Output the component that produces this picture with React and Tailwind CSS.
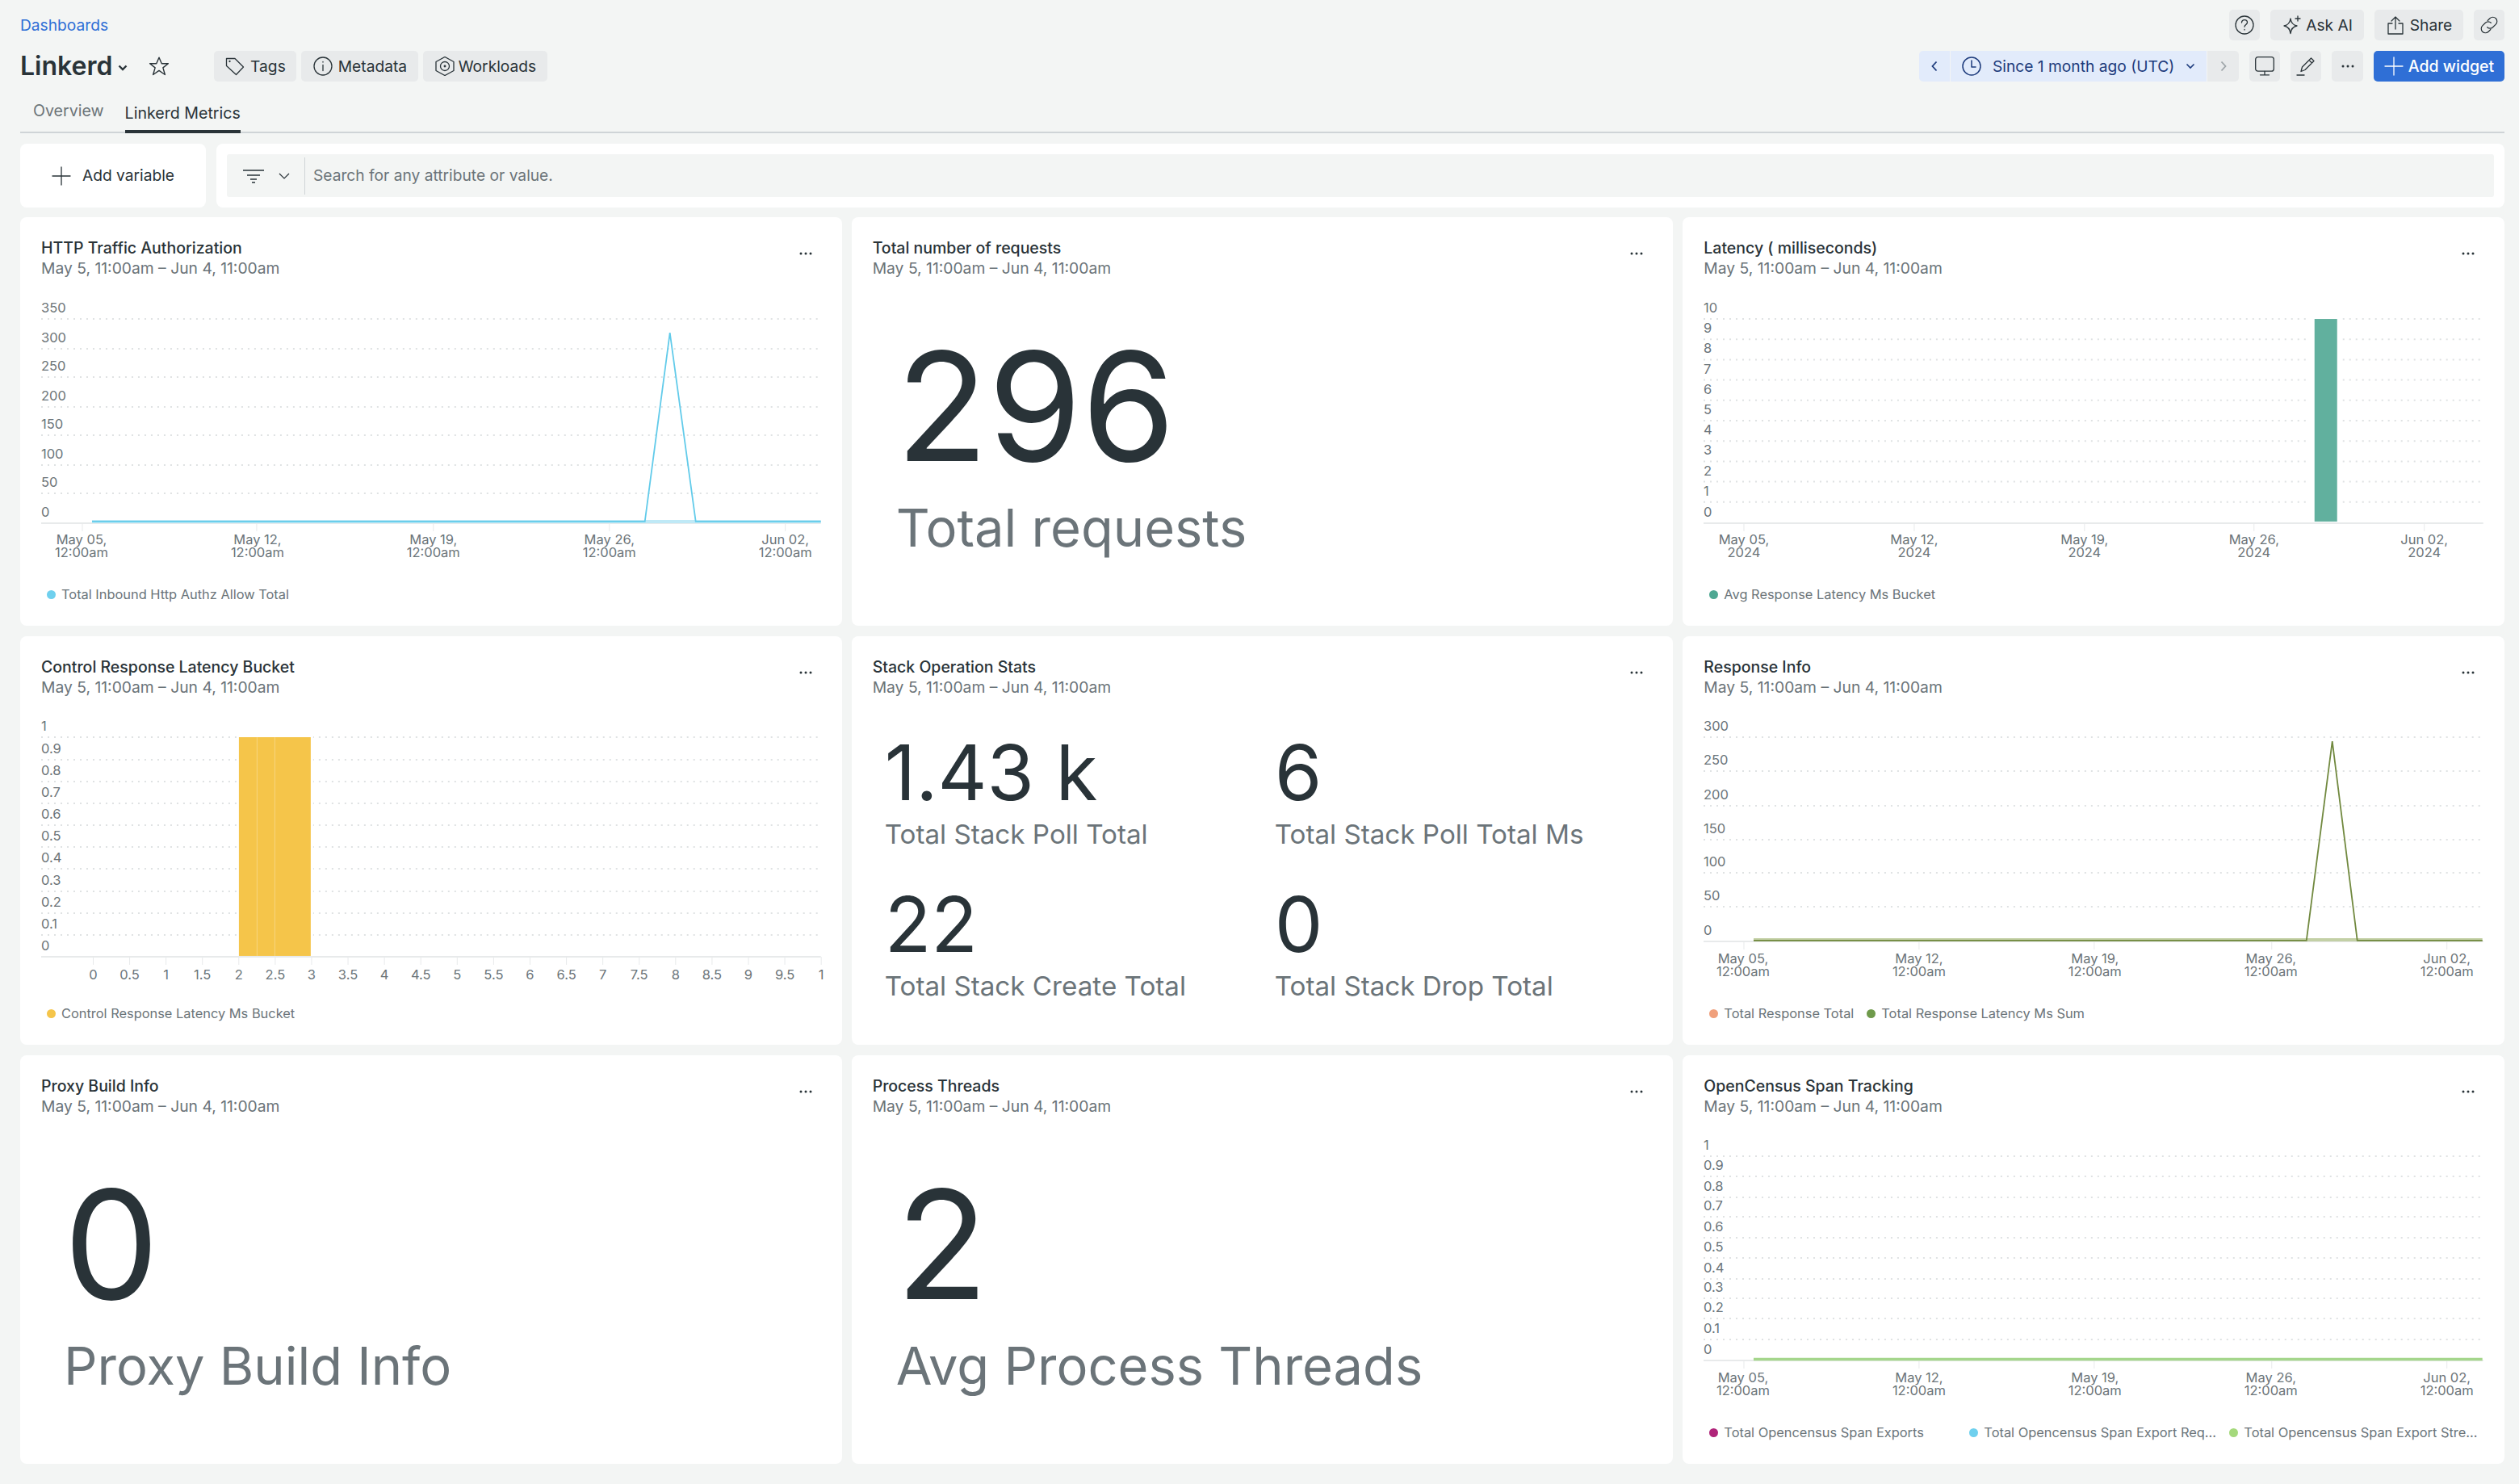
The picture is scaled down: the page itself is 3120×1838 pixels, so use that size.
import React from "react";

const FONT = "font-['Inter',sans-serif]";

function Ico({ children, size = 24, vb = 24, sw = 1.3, className = "" }) {
  return (
    <svg width={size} height={size} viewBox={`0 0 ${vb} ${vb}`} fill="none" stroke="currentColor" strokeWidth={sw} strokeLinecap="round" strokeLinejoin="round" className={className}>
      {children}
    </svg>
  );
}

const TagIcon = () => (
  <Ico><path d="M1.500 2.500h10.500l10.500 10.500-9 9.500L1.500 11.500z" /><circle cx="5.500" cy="6" r="0.500" /></Ico>
);
const InfoIcon = () => (
  <Ico><circle cx="12" cy="12" r="11" /><path d="M12 10.500v7M12 6.500v.5" /></Ico>
);
const HexIcon = () => (
  <Ico><path d="M12 .5l11 6v11l-11 6-11-6v-11z" /><circle cx="12" cy="12" r="5.500" /><circle cx="12" cy="12" r="0.800" /></Ico>
);
const HelpIcon = () => (
  <Ico><circle cx="12" cy="12" r="11" /><path d="M8.500 9c0-2 1.600-3.400 3.500-3.400s3.500 1.300 3.500 3.200c0 2.700-3.500 2.700-3.500 5.400M12 17.500v.6" /></Ico>
);
const SparkIcon = () => (
  <Ico><path d="M11 4c.6 5 3 8 8 9-5 1-7.400 4-8 9.500-.6-5.500-3-8.500-8-9.500 5-1 7.400-4 8-9z" /><path d="M20 1v6M17 4h6" /></Ico>
);
const ShareIcon = () => (
  <Ico><path d="M12 17V2M7 7l5-5 5 5M8 10H3v13h18V10h-5" /></Ico>
);
const LinkIcon = () => (
  <Ico size={22}><path d="M10 6l3-3a5.300 5.300 0 0 1 8 8l-4 4a5.300 5.300 0 0 1-7.500 0" /><path d="M14 18l-3 3a5.300 5.300 0 0 1-8-8l4-4a5.300 5.300 0 0 1 7.500 0" /></Ico>
);
const ClockIcon = () => (
  <Ico sw={1.5}><circle cx="12" cy="12" r="11" /><path d="M12 5v8h5" /></Ico>
);
const MonitorIcon = () => (
  <Ico><rect x="0.700" y="0.700" width="22.600" height="17.500" rx="3" /><path d="M12 18.500v4M6.500 22.800h11" /></Ico>
);
const PencilIcon = () => (
  <Ico><path d="M6 18.500l1.500-5.500L18.500 2l3.500 3.500L11 16.500zM16 4.500l3.500 3.500" /><path d="M1 23h9" /></Ico>
);
const Dots = ({ className = "" }) => (
  <svg width="16" height="4" viewBox="0 0 16 4" fill="currentColor" className={className}>
    <circle cx="2" cy="2" r="1.500" /><circle cx="8" cy="2" r="1.500" /><circle cx="14" cy="2" r="1.500" />
  </svg>
);
const Plus = ({ size = 24 }) => (
  <Ico size={size} sw={1.3}><path d="M12 1v22M1 12h22" /></Ico>
);

function Btn({ children, className = "" }) {
  return (
    <div className={`h-[38px] flex items-center justify-center rounded-[5px] bg-[#e8eaeb] text-[#293338] shrink-0 ${className}`}>
      {children}
    </div>
  );
}

function Header() {
  return (
    <div className="text-[19.2px] leading-[24px]">
      <div className="flex items-center justify-between h-[38px]">
        <span className="text-[#2f6fd6]">Dashboards</span>
        <div className="flex gap-[13px]">
          <Btn className="w-[38px]"><HelpIcon /></Btn>
          <Btn className="w-[116px] gap-[6px]"><SparkIcon /><span>Ask AI</span></Btn>
          <Btn className="w-[110px] gap-[6px]"><ShareIcon /><span>Share</span></Btn>
          <Btn className="w-[38px]"><LinkIcon /></Btn>
        </div>
      </div>
      <div className="flex items-center justify-between h-[38px] mt-[13px]">
        <div className="flex items-center">
          <span className="text-[32px] leading-[38px] font-semibold text-[#293338]">Linkerd</span>
          <svg width="12" height="8" viewBox="0 0 12 8" className="ml-[7px] mt-[3px] text-[#293338]" fill="none" stroke="currentColor" strokeWidth="2.400"><path d="M1.500 1.500L6 6l4.500-4.500" /></svg>
          <svg width="26" height="26" viewBox="0 0 24 24" className="ml-[26px] text-[#293338]" fill="none" stroke="currentColor" strokeWidth="1.300" strokeLinejoin="round"><path d="M12 2l3 7h7.500l-6 4.700 2.300 8L12 17l-6.800 4.700 2.300-8-6-4.700H9z" /></svg>
          <div className="flex gap-[6px] ml-[55px]">
            <Btn className="w-[102px] gap-[7px]"><TagIcon /><span>Tags</span></Btn>
            <Btn className="w-[145px] gap-[7px]"><InfoIcon /><span>Metadata</span></Btn>
            <Btn className="w-[154px] gap-[5px]"><HexIcon /><span>Workloads</span></Btn>
          </div>
        </div>
        <div className="flex items-center">
          <div className="h-[38px] w-[38px] rounded-l-[5px] bg-[#e2ebfb] flex items-center justify-center text-[#1d3b7c]">
            <svg width="10" height="16" viewBox="0 0 10 16" fill="none" stroke="currentColor" strokeWidth="1.800"><path d="M7.500 2.500L2.500 8l5 5.500" /></svg>
          </div>
          <div className="h-[38px] w-[317px] ml-[1px] bg-[#e2ebfb] flex items-center pl-[14px] text-[#1d3b7c]">
            <ClockIcon />
            <span className="ml-[14px]">Since 1 month ago (UTC)</span>
            <svg width="12" height="8" viewBox="0 0 12 8" className="ml-[14px]" fill="none" stroke="currentColor" strokeWidth="1.600"><path d="M1.500 1.500L6 6l4.500-4.500" /></svg>
          </div>
          <div className="h-[38px] w-[39px] ml-[1px] rounded-r-[5px] bg-[#e8eaeb] flex items-center justify-center text-[#9ea5a9]">
            <svg width="10" height="16" viewBox="0 0 10 16" fill="none" stroke="currentColor" strokeWidth="1.800"><path d="M2.500 2.500L7.500 8l-5 5.500" /></svg>
          </div>
          <div className="flex gap-[13px] ml-[13px]">
            <Btn className="w-[38px]"><MonitorIcon /></Btn>
            <Btn className="w-[38px]"><PencilIcon /></Btn>
            <Btn className="w-[39px]"><Dots /></Btn>
            <div className="h-[38px] w-[162px] rounded-[5px] bg-[#2f6fd6] text-white text-[19.5px] font-medium flex items-center justify-center gap-[6px]">
              <Plus /><span>Add widget</span>
            </div>
          </div>
        </div>
      </div>
      <div className="h-[64px] border-b-[2px] border-[#cfd4d7] flex items-end pl-[16px] gap-[26px] text-[19.6px]">
        <div className="h-[52px] flex items-center text-[#6b7479]">Overview</div>
        <div className="h-[52px] pt-[5px] flex items-center text-[#293338] border-b-[4px] border-[#293338] -mb-[2px]">Linkerd Metrics</div>
      </div>
    </div>
  );
}

function FilterBar() {
  return (
    <div className="flex gap-[13px] h-[79px] mt-[13px] text-[19.2px]">
      <div className="w-[230px] rounded-[8px] bg-white flex items-center justify-center gap-[14px] text-[#293338]">
        <Plus /><span>Add variable</span>
      </div>
      <div className="flex-1 rounded-[8px] bg-white flex items-center px-[13px]">
        <div className="flex-1 h-[53px] rounded-[3px] bg-[#f3f5f4] flex items-center">
          <div className="w-[97px] h-[46px] border-r border-[#cfd4d7] flex items-center pl-[20px] gap-[18px] text-[#293338]">
            <svg width="26" height="18" viewBox="0 0 26 18" fill="none" stroke="currentColor" strokeWidth="1.500"><path d="M0 2h26M5 8h16M9 13h8M11 17h4" /></svg>
            <svg width="14" height="8" viewBox="0 0 14 8" fill="none" stroke="currentColor" strokeWidth="1.200"><path d="M1 1l6 6 6-6" /></svg>
          </div>
          <span className="ml-[10px] text-[#6b7479]">Search for any attribute or value.</span>
        </div>
      </div>
    </div>
  );
}

function CardHead({ title }) {
  return (
    <div className="flex justify-between pl-[26px] pr-[37px] pt-[26px]">
      <div>
        <div className="text-[19.5px] leading-[25px] font-medium text-[#293338]">{title}</div>
        <div className="text-[19.3px] leading-[25px] text-[#6b7479]">May 5, 11:00am – Jun 4, 11:00am</div>
      </div>
      <Dots className="mt-[17px] text-[#293338]" />
    </div>
  );
}

function Card({ title, children }) {
  return (
    <div className="h-[506px] rounded-[8px] bg-white flex flex-col overflow-hidden">
      <CardHead title={title} />
      {children}
    </div>
  );
}

const MON = ["May 05,", "May 12,", "May 19,", "May 26,", "Jun 02,"];

function Chart({ grid, yLabels, axisY = 379, ticks, xLabels, children }) {
  return (
    <svg viewBox="0 76 1018 365" width="1018" height="365" className="block w-full" fontFamily="Inter, sans-serif" fontSize="16.500" fill="#6b7479">
      {grid.map((y, i) => (
        <line key={i} x1="26" x2="990" y1={y} y2={y} stroke="#dfe2e3" strokeWidth="2" strokeDasharray="2 6" />
      ))}
      {yLabels.map((t, i) => (
        <text key={t + i} x="26" y={(i === yLabels.length - 1 ? axisY : grid[i]) - 8}>{t}</text>
      ))}
      <line x1="26" x2="992" y1={axisY} y2={axisY} stroke="#e8eaeb" strokeWidth="2" />
      {ticks.map((x) => (
        <line key={x} x1={x} x2={x} y1={axisY} y2={axisY + 10} stroke="#e8eaeb" strokeWidth="1" />
      ))}
      {xLabels}
      {children}
    </svg>
  );
}

function TimeLabels({ second, xs }) {
  return xs.map((x, i) => (
    <text key={i} x={x} y={405} textAnchor="middle">
      <tspan x={x}>{MON[i]}</tspan>
      <tspan x={x} dy="16.500">{second}</tspan>
    </text>
  ));
}

function Legend({ items, cols }) {
  return (
    <div className={`flex pl-[33px] pr-[36px] mt-[16px] text-[16.400px] leading-[20px] text-[#6b7479] ${cols ? "gap-[23px]" : "gap-[16px]"}`}>
      {items.map(([c, t]) => (
        <div key={t} className={`flex items-center gap-[7px] min-w-0 ${cols ? "w-[299px] shrink-0" : ""}`}>
          <span className="w-[11px] h-[11px] rounded-full shrink-0" style={{ background: c }} />
          <span className="whitespace-nowrap">{t}</span>
        </div>
      ))}
    </div>
  );
}

function Billboard({ value, label, pad }) {
  return (
    <div className={`flex-1 ${pad} pt-[68px] text-[#293338]`}>
      <div className="text-[187px] leading-[180px] font-normal">{value}</div>
      <div className="text-[65px] leading-[80px] mt-[21px] text-[#6b7479]">{label}</div>
    </div>
  );
}

function Stat({ value, label }) {
  return (
    <div>
      <div className="text-[94.600px] leading-[96px] text-[#293338]">{value}</div>
      <div className="text-[33.200px] leading-[44px] mt-[6px] text-[#6b7479]">{label}</div>
    </div>
  );
}

const seq = (n, a, s) => Array.from({ length: n }, (_, i) => a + s * i);

export default function App() {
  return (
    <div className={`min-h-[1838px] bg-[#f3f5f4] pt-[12px] pl-[25px] pr-[18px] ${FONT}`}>
      <Header />
      <FilterBar />
      <div className="grid grid-cols-3 gap-x-[12px] gap-y-[13px] mt-[12px]">
        <Card title="HTTP Traffic Authorization">
          <Chart
            grid={[126, 163, 198, 235, 270, 307, 342]}
            yLabels={["350", "300", "250", "200", "150", "100", "50", "0"]}
            ticks={[77, 293, 512, 730, 948]}
            xLabels={<TimeLabels second="12:00am" xs={[76, 294, 512, 730, 948]} />}
          >
            <line x1="89" x2="992" y1="377" y2="377" stroke="#bfe9f6" strokeWidth="4" />
            <polyline points="89,377 774,377 805,143 837,377 992,377" fill="none" stroke="#62cbea" strokeWidth="1.800" />
          </Chart>
          <Legend items={[["#6fd0ee", "Total Inbound Http Authz Allow Total"]]} />
        </Card>
        <Card title="Total number of requests">
          <Billboard value="296" label="Total requests" pad="pl-[55px]" />
        </Card>
        <Card title="Latency ( milliseconds)">
          <Chart
            grid={seq(10, 126, 25.200)}
            yLabels={["10", "9", "8", "7", "6", "5", "4", "3", "2", "1", "0"]}
            ticks={[76, 287, 498, 708, 919]}
            xLabels={<TimeLabels second="2024" xs={[76, 287, 498, 708, 919]} />}
          >
            <rect x="777" y="120" width="40" height="258" fill="#ffffff" />
            <rect x="783" y="126" width="28" height="251" fill="#61b09e" />
          </Chart>
          <Legend items={[["#4fa893", "Avg Response Latency Ms Bucket"]]} />
        </Card>

        <Card title="Control Response Latency Bucket">
          <Chart
            grid={[125, 153, 180, 207, 234, 261, 288, 316, 343, 370]}
            yLabels={["1", "0.9", "0.8", "0.7", "0.6", "0.5", "0.4", "0.3", "0.2", "0.1", "0"]}
            axisY={397}
            ticks={seq(21, 90.500, 45.100)}
            xLabels={["0","0.5","1","1.5","2","2.5","3","3.5","4","4.5","5","5.5","6","6.5","7","7.5","8","8.5","9","9.5","1"].map((t, i) => (
              <text key={i} x={90.500 + 45.100 * i} y="425" textAnchor="middle">{t}</text>
            ))}
          >
            <rect x="268" y="120" width="95" height="276" fill="#ffffff" />
            <rect x="271" y="125" width="89" height="271" fill="#f5c54a" />
            <line x1="293.500" x2="293.500" y1="125" y2="396" stroke="#f8d67f" />
            <line x1="315.500" x2="315.500" y1="125" y2="396" stroke="#f8d67f" />
          </Chart>
          <Legend items={[["#f5c54a", "Control Response Latency Ms Bucket"]]} />
        </Card>
        <Card title="Stack Operation Stats">
          <div className="grid grid-cols-[483px_1fr] pl-[41px] pt-[45px] gap-y-[42px]">
            <Stat value="1.43 k" label="Total Stack Poll Total" />
            <Stat value="6" label="Total Stack Poll Total Ms" />
            <Stat value="22" label="Total Stack Create Total" />
            <Stat value="0" label="Total Stack Drop Total" />
          </div>
        </Card>
        <Card title="Response Info">
          <Chart
            grid={[125, 167, 210, 252, 293, 335]}
            yLabels={["300", "250", "200", "150", "100", "50", "0"]}
            axisY={378}
            ticks={[76, 293, 510, 730, 947]}
            xLabels={<TimeLabels second="12:00am" xs={[75, 293, 511, 729, 947]} />}
          >
            <line x1="88" x2="991" y1="376" y2="376" stroke="#c3d0a6" strokeWidth="4" />
            <polyline points="88,377 773,377 805,130 836,377 991,377" fill="none" stroke="#71893f" strokeWidth="1.800" />
          </Chart>
          <Legend items={[["#f0a07c", "Total Response Total"], ["#6f9a4b", "Total Response Latency Ms Sum"]]} />
        </Card>

        <Card title="Proxy Build Info">
          <Billboard value="0" label="Proxy Build Info" pad="pl-[54px]" />
        </Card>
        <Card title="Process Threads">
          <Billboard value="2" label="Avg Process Threads" pad="pl-[55px]" />
        </Card>
        <Card title="OpenCensus Span Tracking">
          <Chart
            grid={[125, 150, 176, 200, 226, 251, 277, 301, 326, 352]}
            yLabels={["1", "0.9", "0.8", "0.7", "0.6", "0.5", "0.4", "0.3", "0.2", "0.1", "0"]}
            axisY={378}
            ticks={[76, 293, 510, 730, 947]}
            xLabels={<TimeLabels second="12:00am" xs={[75, 293, 511, 729, 947]} />}
          >
            <line x1="88" x2="991" y1="376.500" y2="376.500" stroke="#a5d68c" strokeWidth="3.500" />
          </Chart>
          <Legend cols items={[["#b0247a", "Total Opencensus Span Exports"], ["#6fd0ee", "Total Opencensus Span Export Req..."], ["#a5d97c", "Total Opencensus Span Export Stre..."]]} />
        </Card>
      </div>
    </div>
  );
}
